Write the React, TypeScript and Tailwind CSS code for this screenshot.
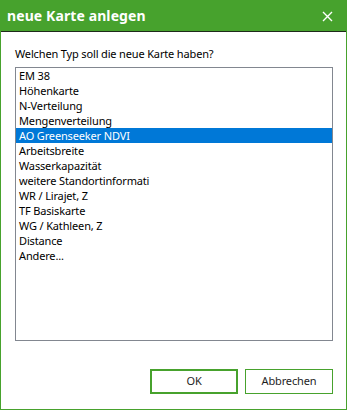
const ITEMS = [
  'EM 38',
  'Höhenkarte',
  'N-Verteilung',
  'Mengenverteilung',
  'AO Greenseeker NDVI',
  'Arbeitsbreite',
  'Wasserkapazität',
  'weitere Standortinformati',
  'WR / Lirajet, Z',
  'TF Basiskarte',
  'WG / Kathleen, Z',
  'Distance',
  'Andere...',
]

export default function App() {
  const selected = 4
  return (
    <div className="w-[347px] h-[410px] bg-white border border-[#47a22d] flex flex-col font-['Noto_Sans',sans-serif] text-black">
      {/* title bar */}
      <div className="h-[30px] bg-[#47a22d] border-b border-[#1f2a1b] flex items-center justify-between pl-[6px] pr-[13px] box-content">
        <span className="text-white font-bold text-[14px] tracking-[0.1px] leading-none">neue Karte anlegen</span>
        <svg width="11" height="11" viewBox="0 0 11 11" aria-hidden>
          <path d="M1 1 L10 10 M10 1 L1 10" stroke="white" strokeWidth="1.4" />
        </svg>
      </div>

      <div className="flex flex-col pl-[14px] pr-[13px] text-[11px] tracking-[-0.15px]">
        <p className="mt-[14px] leading-[16px]">Welchen Typ soll die neue Karte haben?</p>

        <ul className="mt-[5px] h-[274px] border border-[#828790]">
          {ITEMS.map((item, i) => (
            <li
              key={item}
              className={
                i === selected
                  ? 'h-[15px] leading-[15px] pl-[3px] bg-[#0078d7] text-white'
                  : 'h-[15px] leading-[15px] pl-[3px]'
              }
            >
              {item}
            </li>
          ))}
        </ul>

        <div className="mt-[28px] flex justify-end gap-[7px] text-[#1e1e1e]">
          <button className="w-[88px] h-[25px] border-2 border-[#47a22d] bg-white">OK</button>
          <button className="w-[88px] h-[25px] border border-[#47a22d] bg-white">Abbrechen</button>
        </div>
      </div>
    </div>
  )
}
